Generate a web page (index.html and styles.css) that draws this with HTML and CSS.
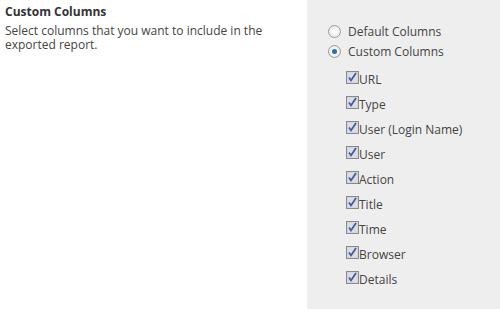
FILE: index.html
```html
<!DOCTYPE html>
<html lang="en">
<head>
    <meta charset="UTF-8">
    <title>Export Report</title>
    <link rel="stylesheet" href="styles.css">
</head>
<body>

    <div class="section">
        <div class="section-info">
            <h3>Custom Columns</h3>
            <p>Select columns that you want to include in the exported report.</p>
        </div>

        <div class="section-body">
            <label class="radio"><span class="radio-dot"></span>Default Columns</label>
            <label class="radio"><span class="radio-dot selected"></span>Custom Columns</label>

            <div class="column-list">
                <label class="check"><svg class="box" viewBox="0 0 13 13"><rect x="0.5" y="0.5" width="12" height="12" fill="#c9cfdb" stroke="#8a8a8a"/><rect x="1.5" y="1.5" width="10" height="10" fill="#d9dde6"/><path d="M3 6.5 L5 9.5 L10 2" fill="none" stroke="#4a5a9c" stroke-width="1.8"/></svg>URL</label>
                <label class="check"><svg class="box" viewBox="0 0 13 13"><rect x="0.5" y="0.5" width="12" height="12" fill="#c9cfdb" stroke="#8a8a8a"/><rect x="1.5" y="1.5" width="10" height="10" fill="#d9dde6"/><path d="M3 6.5 L5 9.5 L10 2" fill="none" stroke="#4a5a9c" stroke-width="1.8"/></svg>Type</label>
                <label class="check"><svg class="box" viewBox="0 0 13 13"><rect x="0.5" y="0.5" width="12" height="12" fill="#c9cfdb" stroke="#8a8a8a"/><rect x="1.5" y="1.5" width="10" height="10" fill="#d9dde6"/><path d="M3 6.5 L5 9.5 L10 2" fill="none" stroke="#4a5a9c" stroke-width="1.8"/></svg>User (Login Name)</label>
                <label class="check"><svg class="box" viewBox="0 0 13 13"><rect x="0.5" y="0.5" width="12" height="12" fill="#c9cfdb" stroke="#8a8a8a"/><rect x="1.5" y="1.5" width="10" height="10" fill="#d9dde6"/><path d="M3 6.5 L5 9.5 L10 2" fill="none" stroke="#4a5a9c" stroke-width="1.8"/></svg>User</label>
                <label class="check"><svg class="box" viewBox="0 0 13 13"><rect x="0.5" y="0.5" width="12" height="12" fill="#c9cfdb" stroke="#8a8a8a"/><rect x="1.5" y="1.5" width="10" height="10" fill="#d9dde6"/><path d="M3 6.5 L5 9.5 L10 2" fill="none" stroke="#4a5a9c" stroke-width="1.8"/></svg>Action</label>
                <label class="check"><svg class="box" viewBox="0 0 13 13"><rect x="0.5" y="0.5" width="12" height="12" fill="#c9cfdb" stroke="#8a8a8a"/><rect x="1.5" y="1.5" width="10" height="10" fill="#d9dde6"/><path d="M3 6.5 L5 9.5 L10 2" fill="none" stroke="#4a5a9c" stroke-width="1.8"/></svg>Title</label>
                <label class="check"><svg class="box" viewBox="0 0 13 13"><rect x="0.5" y="0.5" width="12" height="12" fill="#c9cfdb" stroke="#8a8a8a"/><rect x="1.5" y="1.5" width="10" height="10" fill="#d9dde6"/><path d="M3 6.5 L5 9.5 L10 2" fill="none" stroke="#4a5a9c" stroke-width="1.8"/></svg>Time</label>
                <label class="check"><svg class="box" viewBox="0 0 13 13"><rect x="0.5" y="0.5" width="12" height="12" fill="#c9cfdb" stroke="#8a8a8a"/><rect x="1.5" y="1.5" width="10" height="10" fill="#d9dde6"/><path d="M3 6.5 L5 9.5 L10 2" fill="none" stroke="#4a5a9c" stroke-width="1.8"/></svg>Browser</label>
                <label class="check"><svg class="box" viewBox="0 0 13 13"><rect x="0.5" y="0.5" width="12" height="12" fill="#c9cfdb" stroke="#8a8a8a"/><rect x="1.5" y="1.5" width="10" height="10" fill="#d9dde6"/><path d="M3 6.5 L5 9.5 L10 2" fill="none" stroke="#4a5a9c" stroke-width="1.8"/></svg>Details</label>
            </div>
        </div>
    </div>

</body>
</html>
```

FILE: styles.css
```css
body {
    margin: 0;
    font-family: 'Open Sans', 'DejaVu Sans', sans-serif;
    font-size: 12px;
    color: #444;
    background: #fff;
}

.section {
    display: flex;
    height: 309px;
}

.section-info {
    width: 302px;
    padding: 4px 0 0 5px;
}

.section-info h3 {
    margin: 0 0 4px 0;
    font-size: 12px;
    font-weight: bold;
    color: #333;
    line-height: 16px;
}

.section-info p {
    margin: 0;
    width: 275px;
    line-height: 14px;
}

.section-body {
    flex: 1;
    background: #eeeeee;
    padding: 21px 0 0 21px;
}

.radio {
    display: flex;
    align-items: center;
    height: 20px;
}

.radio-dot {
    width: 11px;
    height: 11px;
    border: 1px solid #9a9a9a;
    border-radius: 50%;
    background: radial-gradient(circle, #fff 0%, #e4e4e4 100%);
    margin-right: 7px;
    position: relative;
}

.radio-dot.selected::after {
    content: '';
    position: absolute;
    left: 3px;
    top: 3px;
    width: 5px;
    height: 5px;
    border-radius: 50%;
    background: #2a6fb0;
}

.column-list {
    padding: 9px 0 0 18px;
}

.check {
    display: flex;
    align-items: flex-start;
    height: 25px;
    line-height: 20px;
}

.check .box {
    width: 13px;
    height: 13px;
    margin-top: 1px;
    flex-shrink: 0;
}
```
